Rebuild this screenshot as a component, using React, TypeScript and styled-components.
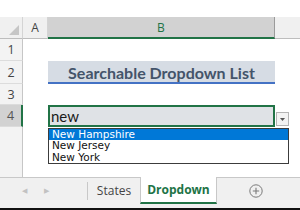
import React from 'react'
import styled, { createGlobalStyle } from 'styled-components'

const GlobalStyle = createGlobalStyle`
  html, body {
    margin: 0;
    padding: 0;
    background: #ffffff;
  }
  * {
    box-sizing: border-box;
  }
`

const states = ['New Hampshire', 'New Jersey', 'New York']

function App() {
  return (
    <>
      <GlobalStyle />
      <Window>
        <TopBand />
        <Sheet>
          <Corner>
            <svg width="10" height="10" viewBox="0 0 10 10">
              <polygon points="10,0 10,10 0,10" fill="#c6c6c6" />
            </svg>
          </Corner>
          <ColHead>A</ColHead>
          <ColHead active>B</ColHead>
          <ColRest />

          <RowHead>1</RowHead>
          <Cell />
          <Cell />
          <Cell />

          <RowHead>2</RowHead>
          <Cell />
          <TitleCell>Searchable Dropdown List</TitleCell>
          <Cell />

          <RowHead>3</RowHead>
          <Cell />
          <Cell />
          <Cell />

          <RowHead active>4</RowHead>
          <Cell />
          <InputCell>new</InputCell>
          <Cell />

          <RowHead blank />
          <Cell />
          <Cell />
          <Cell />

          <ArrowButton>
            <svg width="5" height="3" viewBox="0 0 5 3">
              <polygon points="0,0 5,0 2.5,3" fill="#555" />
            </svg>
          </ArrowButton>
          <ListBox>
            {states.map((s, i) => (
              <ListItem key={s} selected={i === 0}>{s}</ListItem>
            ))}
          </ListBox>
        </Sheet>

        <TabBar>
          <NavArrows>
            <span>◀</span>
            <span>▶</span>
          </NavArrows>
          <Tab>States</Tab>
          <Tab active>Dropdown</Tab>
          <AddSheet>
            <svg width="14" height="14" viewBox="0 0 14 14">
              <circle cx="7" cy="7" r="6.2" fill="none" stroke="#7a7a7a" strokeWidth="1" />
              <path d="M7 3.8v6.4M3.8 7h6.4" stroke="#7a7a7a" strokeWidth="1.1" />
            </svg>
          </AddSheet>
        </TabBar>
        <BottomEdge />
      </Window>
    </>
  )
}

const Window = styled.div`
  width: 300px;
  height: 210px;
  display: flex;
  flex-direction: column;
  overflow: hidden;
  background: #ffffff;
  font-family: "Liberation Sans", Arial, sans-serif;
`

const TopBand = styled.div`
  height: 17px;
  flex-shrink: 0;
  background: #ffffff;
`

const Sheet = styled.div`
  position: relative;
  display: grid;
  grid-template-columns: 23px 25px 227px 1fr;
  grid-template-rows: 22px 22px 23px 21px 22px 1fr;
  height: 160px;
  flex-shrink: 0;
`

const Corner = styled.div`
  background: #f0f0f0;
  border-right: 1px solid #d4d4d4;
  border-bottom: 1px solid #bdbdbd;
  display: flex;
  align-items: flex-end;
  justify-content: flex-end;
  padding: 0 3px 3px 0;
`

const ColHead = styled.div<{ active?: boolean }>`
  display: flex;
  align-items: center;
  justify-content: center;
  font-family: "Open Sans", sans-serif;
  font-size: 12px;
  color: ${p => (p.active ? '#217346' : '#444')};
  background: ${p => (p.active ? '#d2d2d2' : '#f0f0f0')};
  border-right: 1px solid ${p => (p.active ? '#9b9b9b' : '#d4d4d4')};
  border-bottom: ${p => (p.active ? '2px solid #217346' : '1px solid #bdbdbd')};
`

const ColRest = styled.div`
  background: #f0f0f0;
  border-bottom: 1px solid #bdbdbd;
`

const RowHead = styled.div<{ active?: boolean; blank?: boolean }>`
  display: flex;
  align-items: center;
  justify-content: center;
  font-family: "Open Sans", sans-serif;
  font-size: 12.5px;
  color: ${p => (p.active ? '#555' : '#444')};
  background: ${p => (p.active ? '#d2d2d2' : '#f3f3f3')};
  border-right: ${p => (p.active ? '2px solid #217346' : '1px solid #c6c6c6')};
  border-bottom: ${p => (p.blank ? 'none' : '1px solid #dcdcdc')};
`

const Cell = styled.div`
  background: #ffffff;
`

const TitleCell = styled.div`
  display: flex;
  align-items: center;
  justify-content: center;
  background: #d6dce4;
  border-bottom: 2px solid #4472c4;
  color: #44546a;
  font-family: Lato, "Open Sans", sans-serif;
  font-weight: 700;
  font-size: 16px;
  padding-top: 1px;
`

const InputCell = styled.div`
  display: flex;
  align-items: center;
  background: #dfe2e6;
  border: 2px solid #217346;
  padding: 0 0 0 1px;
  font-family: Lato, "Open Sans", sans-serif;
  font-size: 15px;
  color: #1a1a1a;
`

const ArrowButton = styled.div`
  position: absolute;
  left: 276px;
  top: 95px;
  width: 13px;
  height: 14px;
  background: #f3f3f3;
  border: 1px solid #b4b4b4;
  display: flex;
  align-items: center;
  justify-content: center;
`

const ListBox = styled.div`
  position: absolute;
  left: 48px;
  top: 111px;
  width: 241px;
  height: 36px;
  background: #ffffff;
  border: 1px solid #3c3c3c;
  display: flex;
  flex-direction: column;
`

const ListItem = styled.div<{ selected?: boolean }>`
  height: 11.3px;
  line-height: 11px;
  padding-left: 3px;
  font-family: "DejaVu Sans", sans-serif;
  font-size: 10.5px;
  color: ${p => (p.selected ? '#ffffff' : '#111')};
  background: ${p => (p.selected ? '#0078d7' : 'transparent')};
`

const TabBar = styled.div`
  flex: 1;
  display: flex;
  align-items: stretch;
  background: #f0f0f0;
  border-top: 1px solid #c8c8c8;
  padding-bottom: 4px;
`

const NavArrows = styled.div`
  width: 88px;
  display: flex;
  align-items: center;
  gap: 17px;
  padding-left: 22px;
  font-size: 7px;
  color: #c2c2c2;
  border-right: 1px solid #c8c8c8;
  margin: 4px 0;
`

const Tab = styled.div<{ active?: boolean }>`
  display: flex;
  align-items: center;
  justify-content: center;
  width: ${p => (p.active ? '77px' : '52px')};
  margin-top: -1px;
  font-family: "Open Sans", sans-serif;
  font-size: 12px;
  font-weight: ${p => (p.active ? 700 : 400)};
  color: ${p => (p.active ? '#217346' : '#444')};
  background: ${p => (p.active ? '#ffffff' : 'transparent')};
  border-left: ${p => (p.active ? '1px solid #c8c8c8' : 'none')};
  border-right: ${p => (p.active ? '1px solid #c8c8c8' : 'none')};
  border-bottom: ${p => (p.active ? '2px solid #217346' : 'none')};
`

const AddSheet = styled.div`
  flex: 1;
  display: flex;
  align-items: center;
  justify-content: center;
  padding-right: 6px;
`

const BottomEdge = styled.div`
  height: 2px;
  flex-shrink: 0;
  background: #111;
`

export default App
